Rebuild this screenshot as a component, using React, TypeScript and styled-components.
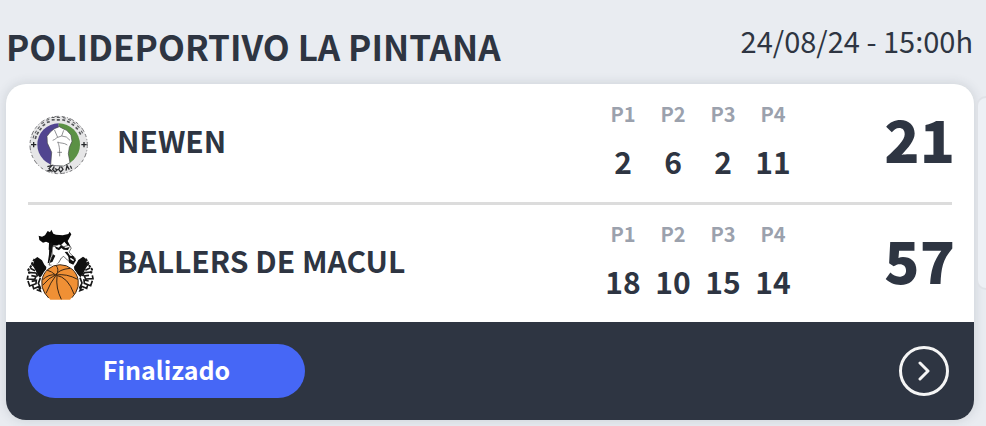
import React from "react";
import styled, { createGlobalStyle } from "styled-components";

const ink = "#2e3542";

const GlobalStyle = createGlobalStyle`
  *, *::before, *::after { box-sizing: border-box; }
  body {
    margin: 0;
    background: #e9ecf1;
    color: ${ink};
    font-family: "Noto Sans CJK SC", "Noto Sans", sans-serif;
    overflow-x: hidden;
  }
`;

const Page = styled.main`
  padding: 20px 0 6px 6px;
`;

const Header = styled.header`
  display: flex;
  justify-content: space-between;
  align-items: flex-start;
  padding-right: 13px;
  height: 64px;
`;

const Venue = styled.h1`
  margin: 0;
  font-size: 35px;
  line-height: 52px;
  font-weight: 700;
  white-space: nowrap;
`;

const Kickoff = styled.time`
  font-size: 29px;
  line-height: 40px;
  font-weight: 400;
  white-space: nowrap;
`;

const Carousel = styled.div`
  display: flex;
  align-items: flex-start;
  gap: 2px;
`;

const Card = styled.article`
  flex: 1;
  min-width: 0;
  border-radius: 20px;
  background: #fff;
  overflow: hidden;
  box-shadow: 0 0 12px rgba(46, 53, 66, 0.16);
`;

const NextCard = styled.div`
  flex: none;
  width: 10px;
  height: 194px;
  margin-top: 12px;
  border: 2px solid #dfe2e7;
  border-right: 0;
  border-radius: 12px 0 0 12px;
  background: #edf0f5;
`;

const Teams = styled.div`
  padding: 0 22px;
`;

const TeamRow = styled.section`
  display: flex;
  align-items: center;
  height: 118px;

  & + & {
    border-top: 3px solid #dcdcdc;
    height: 120px;
  }
`;

const Crest = styled.svg`
  flex: none;
  width: 68px;
  height: 80px;
  overflow: visible;
`;

const TeamName = styled.h2`
  flex: 1;
  margin: 0 0 0 21px;
  padding-bottom: 7px;
  font-size: 30px;
  line-height: 40px;
  font-weight: 700;
  white-space: nowrap;
`;

const Periods = styled.table`
  border-collapse: collapse;
  table-layout: fixed;
  width: 200px;
  margin-bottom: 5px;
  text-align: center;
`;

const PeriodLabel = styled.th`
  padding: 0;
  font-size: 20px;
  line-height: 40px;
  font-weight: 700;
  color: #9ba1ad;
`;

const PeriodScore = styled.td`
  padding: 0;
  font-size: 30px;
  line-height: 54px;
  font-weight: 700;
`;

const Total = styled.strong`
  width: 157px;
  margin-right: -3px;
  padding-bottom: 10px;
  text-align: right;
  font-size: 58px;
  line-height: 72px;
  font-weight: 900;
`;

const Footer = styled.footer`
  display: flex;
  align-items: center;
  justify-content: space-between;
  padding: 22px 25px 22px 22px;
  background: ${ink};
`;

const Status = styled.span`
  width: 277px;
  height: 54px;
  border-radius: 27px;
  background: #4667f6;
  color: #fff;
  text-align: center;
  font-size: 25px;
  line-height: 50px;
  font-weight: 700;
`;

const DetailButton = styled.button`
  display: grid;
  place-items: center;
  width: 50px;
  height: 50px;
  padding: 0;
  border: 3px solid #f5f5f5;
  border-radius: 50%;
  background: transparent;
  color: #f5f5f5;
  cursor: pointer;
`;

const NewenCrest = () => (
  <Crest viewBox="24 -4 204 240" role="img" aria-label="Newen">
    <circle cx="116" cy="122" r="87" fill="#e6e6e7" />
    <circle cx="116" cy="122" r="86" fill="none" stroke="#77777a" strokeWidth="3" strokeDasharray="9 7 3 5 14 8" />
    <path d="M116 57a64 64 0 0 0 0 128z" fill="#514590" />
    <path d="M116 57a64 64 0 0 1 0 128z" fill="#5b9145" />
    <path d="M92 183l3-39-13-28-1-20 10-13 12-10 15-6 13 7 9 4 13 14 3 19-8 18-3 19 5 27-19 10-22-1z" fill="#fff" stroke="#45484c" strokeWidth="2" strokeLinejoin="round" />
    <path d="M103 76l10 23 12-4 6-17M125 95l14 3 11 10M98 108c8-2 12-9 15-9M113 113c8 5 18 1 29 9M113 113c5 10 6 20 6 43M112 144h14" fill="none" stroke="#5a5c60" strokeWidth="2" />
    <path d="M33 121h16M41 113v16M184 121h16M192 113v16" stroke="#242629" strokeWidth="4" />
    <path d="M39 97l13 4M46 82l11 7M55 69l10 8M67 55l7 11M83 45l3 13M99 38l1 13M115 38v13M133 39l-3 13M149 45l-6 12M163 54l-7 11M176 66l-9 10M187 82l-11 7" stroke="#55575a" strokeWidth="9" strokeDasharray="3 3 5 3" />
    <path d="M82 187l13-3-8 9 8 7-13-1M103 186l-5 9 7 8 7-7-8-3M121 186l-5 9 6 8 7-8-5-8M138 199l3-15 7 12M151 184l4 9" fill="none" stroke="#2d2f32" strokeWidth="4" />
  </Crest>
);

const BallersCrest = () => (
  <Crest viewBox="24 0 204 240" role="img" aria-label="Ballers de Macul">
    <path d="M56 35l10 3 9-4 8-13 7 4 4-8 6 12 8 3 20 2 17-4 4-7 5 8-7 13-4 7 9 17-5 2-14-17-12 12 4 11-6 2-5-15-16 2-7 13-5-1 1-20-9-4-9 3-11-8z" fill="#090909" />
    <path d="M88 59l8-5 3 12-5 28-7 23-4 1 4-27z" fill="#111" />
    <path d="M97 69l12-4 8-4 14 7 15-4 8 8-7 12 9 10 10 8-3 10-9 5-12-9-11-11-7 5-8 14-12 9-17-2 9-26z" fill="#fff" stroke="#222" strokeWidth="2" />
    <path d="M104 67l12 4 7-7 14 8 12-3-5 9-13-1-7-5-7 7-9-5zM99 91l7 4-9 19-8 2zM134 84l8-1 8 12 12 4-2 7-9-1z" fill="#111" />
    <path d="M145 96l14-1 9 14-8 13-13-6z" fill="#101010" />
    <path d="M151 103l10 7" stroke="#fff" strokeWidth="4" />
    <g id="wing">
      <path d="M45 104l7-5 14 10 7 13 6 7-1 10-10 13-8 9-6-7-8-16-8-14z" fill="#101010" />
      <path d="M44 105l-6 10-6 13-7 9 4 12" fill="none" stroke="#181818" strokeWidth="6" strokeDasharray="8 3" />
      <path d="M35 121l11 7M31 133l14 7M24 145l24 2 6 10M24 155l-2 10 22 1 4-9-14-2M24 171l5 15 19-7 1-10-14 3M37 181l4 13 15-6 5 13-11-4M61 162l-6 16 8 17" fill="none" stroke="#181818" strokeWidth="5" />
    </g>
    <use href="#wing" transform="matrix(-1 0 0 1 241 -1)" />
    <circle cx="120" cy="176" r="58" fill="#fff" />
    <path d="M74 208a55 55 0 1 1 93-1l-17 20H91z" fill="#f09035" />
    <g fill="none" stroke="#3b2614" strokeWidth="3">
      <path d="M74 207a55 55 0 1 1 93-1l-11 15M74 207l12 15" />
      <path d="M67 168q20-19 40-15q33-5 66 13M107 123q13 14 1 31q-16 20-30 54M107 153q-12-11-27-15M107 153q10-17 43-20M109 154q35 5 53 56M111 156q-4 37 13 70M68 184q20-24 37-30" />
    </g>
  </Crest>
);

type Team = {
  name: string;
  crest: React.ReactNode;
  periods: number[];
  total: number;
};

const teams: Team[] = [
  { name: "NEWEN", crest: <NewenCrest />, periods: [2, 6, 2, 11], total: 21 },
  { name: "BALLERS DE MACUL", crest: <BallersCrest />, periods: [18, 10, 15, 14], total: 57 },
];

export default function App() {
  return (
    <>
      <GlobalStyle />
      <Page>
        <Header>
          <Venue>POLIDEPORTIVO LA PINTANA</Venue>
          <Kickoff dateTime="2024-08-24T15:00">24/08/24 - 15:00h</Kickoff>
        </Header>
        <Carousel>
          <Card>
            <Teams>
              {teams.map((team) => (
                <TeamRow key={team.name}>
                  {team.crest}
                  <TeamName>{team.name}</TeamName>
                  <Periods aria-label={team.name}>
                    <thead>
                      <tr>
                        {team.periods.map((_, i) => (
                          <PeriodLabel key={i} scope="col">P{i + 1}</PeriodLabel>
                        ))}
                      </tr>
                    </thead>
                    <tbody>
                      <tr>
                        {team.periods.map((score, i) => (
                          <PeriodScore key={i}>{score}</PeriodScore>
                        ))}
                      </tr>
                    </tbody>
                  </Periods>
                  <Total>{team.total}</Total>
                </TeamRow>
              ))}
            </Teams>
            <Footer>
              <Status>Finalizado</Status>
              <DetailButton type="button" aria-label="Ver partido">
                <svg width="12" height="20" viewBox="0 0 12 20" fill="none" stroke="currentColor" strokeWidth="3" strokeLinecap="round" strokeLinejoin="round">
                  <path d="M2 2l8 8-8 8" />
                </svg>
              </DetailButton>
            </Footer>
          </Card>
          <NextCard />
        </Carousel>
      </Page>
    </>
  );
}
